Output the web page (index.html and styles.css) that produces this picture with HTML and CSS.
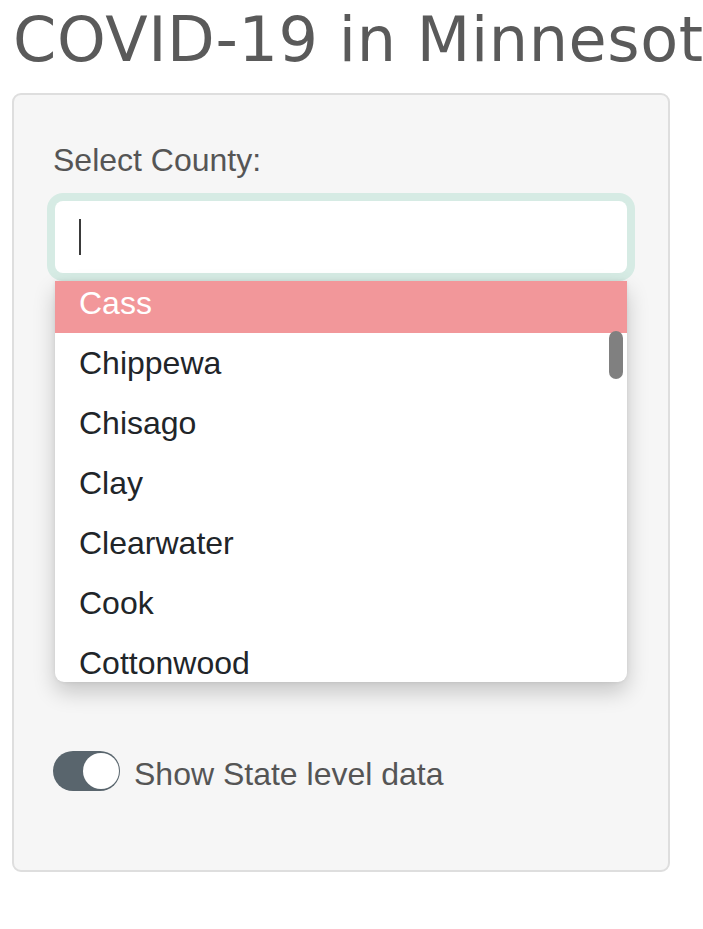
FILE: index.html
```html
<!DOCTYPE html>
<html lang="en">
<head>
<meta charset="utf-8">
<title>COVID-19 in Minnesota</title>
<link rel="stylesheet" href="styles.css">
</head>
<body>
<h1 class="title">COVID-19 in Minnesota</h1>
<div class="well">
  <label class="field-label">Select County:</label>
  <div class="select">
    <div class="select-input"><span class="caret"></span></div>
    <div class="dropdown">
      <div class="options">
        <div class="option active">Cass</div>
        <div class="option">Chippewa</div>
        <div class="option">Chisago</div>
        <div class="option">Clay</div>
        <div class="option">Clearwater</div>
        <div class="option">Cook</div>
        <div class="option">Cottonwood</div>
      </div>
      <div class="thumb"></div>
    </div>
  </div>
  <div class="switch-row">
    <span class="switch"><span class="knob"></span></span>
    <span class="switch-label">Show State level data</span>
  </div>
</div>
</body>
</html>
```
FILE: styles.css
```css
html, body {
  margin: 0;
  padding: 0;
  background: #ffffff;
  overflow: hidden;
}
body {
  width: 703px;
  height: 929px;
  font-family: "Liberation Sans", Arial, sans-serif;
}
.title {
  margin: 0;
  padding: 4px 0 0 13px;
  font-family: "DejaVu Sans", sans-serif;
  font-weight: normal;
  font-size: 62px;
  line-height: 72px;
  letter-spacing: 0.6px;
  color: #5a5a5a;
  white-space: nowrap;
}
.well {
  box-sizing: border-box;
  width: 658px;
  margin: 17px 0 0 12px;
  padding: 45px 39px 76px 39px;
  background: #f6f6f6;
  border: 2px solid #dedede;
  border-radius: 9px;
}
.field-label {
  display: block;
  font-size: 32px;
  line-height: 40px;
  color: #555555;
}
.select {
  position: relative;
  margin: 21px 2px 0 2px;
}
.select-input {
  height: 72px;
  box-sizing: border-box;
  background: #ffffff;
  border-radius: 8px;
  box-shadow: 0 0 0 8px #d6ebe4;
  display: flex;
  align-items: center;
  padding-left: 24px;
}
.caret {
  width: 2px;
  height: 36px;
  background: #3a3a3a;
}
.dropdown {
  position: absolute;
  top: calc(100% + 8px);
  left: 0;
  right: 0;
  height: 401px;
  background: #ffffff;
  border-radius: 0 0 9px 9px;
  box-shadow: 0 10px 22px rgba(0, 0, 0, 0.2), 0 0 4px rgba(0, 0, 0, 0.08);
  overflow: hidden;
  z-index: 5;
}
.options {
  margin-top: -8px;
}
.option {
  height: 60px;
  line-height: 60px;
  padding-left: 24px;
  font-size: 32px;
  color: #212529;
}
.option.active {
  background: #f2979a;
  color: #ffffff;
}
.thumb {
  position: absolute;
  top: 50px;
  right: 4px;
  width: 14px;
  height: 48px;
  border-radius: 7px;
  background: #808080;
}
.switch-row {
  margin-top: 478px;
  display: flex;
  align-items: flex-start;
  gap: 14px;
}
.switch {
  position: relative;
  flex: none;
  width: 67px;
  height: 40px;
  border-radius: 20px;
  background: #59656d;
}
.knob {
  position: absolute;
  top: 2px;
  right: 1px;
  width: 36px;
  height: 36px;
  border-radius: 50%;
  background: #ffffff;
}
.switch-label {
  font-size: 32px;
  line-height: 40px;
  padding-top: 3px;
  color: #555555;
}
```
